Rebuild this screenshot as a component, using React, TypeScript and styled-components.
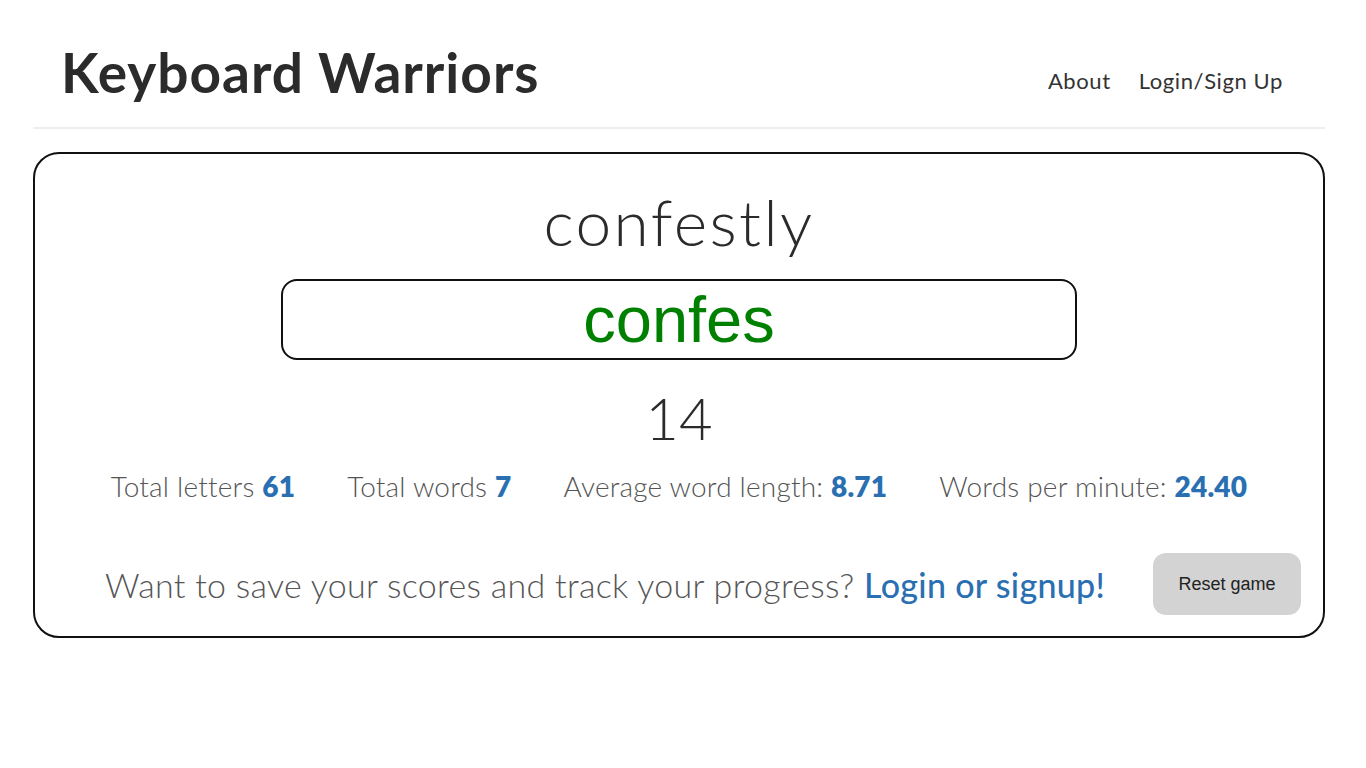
import styled, { createGlobalStyle } from 'styled-components';

const GlobalStyle = createGlobalStyle`
  body {
    margin: 0;
    background: #fff;
    font-family: Lato, "Open Sans", sans-serif;
    color: #333;
  }
`;

const Page = styled.div`
  width: 1292px;
  margin: 0 0 0 33px;
  padding-top: 25px;
`;

const Header = styled.header`
  display: flex;
  justify-content: space-between;
  align-items: center;
  height: 104px;
  padding: 0 42px 0 28px;
  border-bottom: 2px solid #eee;
  box-sizing: border-box;
`;

const Brand = styled.h1`
  margin: 0 0 8px;
  font-size: 55px;
  font-weight: 700;
  color: #2b2b2b;
  letter-spacing: 1px;
`;

const Nav = styled.nav`
  display: flex;
  gap: 28px;
  padding-top: 8px;
`;

const NavLink = styled.a`
  font-size: 22px;
  letter-spacing: 0.6px;
  color: #333;
  text-decoration: none;
  cursor: pointer;
`;

const Card = styled.main`
  margin-top: 23px;
  border: 2px solid #111;
  border-radius: 26px;
  height: 486px;
  box-sizing: border-box;
  display: flex;
  flex-direction: column;
  align-items: center;
  padding-top: 31px;
`;

const Target = styled.div`
  font-size: 64px;
  font-weight: 300;
  letter-spacing: 2.4px;
  color: #2b2b2b;
  line-height: 74px;
`;

const TypedBox = styled.div`
  margin-top: 20px;
  width: 796px;
  height: 81px;
  box-sizing: border-box;
  border: 2px solid #111;
  border-radius: 16px;
  display: flex;
  align-items: center;
  justify-content: center;
  font-family: "Liberation Sans", Arial, sans-serif;
  font-size: 65px;
  color: #008000;
`;

const Timer = styled.div`
  margin-top: 23px;
  font-size: 58px;
  font-weight: 300;
  color: #2b2b2b;
  line-height: 70px;
`;

const Stats = styled.div`
  margin-top: 16px;
  display: flex;
  gap: 52px;
  font-size: 28px;
  font-weight: 300;
  letter-spacing: 0.2px;
  color: #555;
`;

const Value = styled.b`
  font-weight: 800;
  color: #2a6fb2;
`;

const Footer = styled.div`
  margin-top: 50px;
  width: 100%;
  display: flex;
  align-items: center;
  padding: 0 22px 0 22px;
  box-sizing: border-box;
`;

const Prompt = styled.p`
  flex: 1;
  margin: 0;
  text-align: center;
  font-size: 34px;
  font-weight: 300;
  letter-spacing: 0.3px;
  color: #555;
`;

const PromptLink = styled.a`
  font-weight: 500;
  color: #2a6fb2;
  text-decoration: none;
  cursor: pointer;
`;

const ResetButton = styled.button`
  width: 148px;
  height: 62px;
  border: none;
  border-radius: 13px;
  background: #d3d3d3;
  font-family: "Liberation Sans", Arial, sans-serif;
  font-size: 18px;
  color: #222;
  cursor: pointer;
`;

export default function App() {
  const stats = [
    { label: 'Total letters', value: '61' },
    { label: 'Total words', value: '7' },
    { label: 'Average word length:', value: '8.71' },
    { label: 'Words per minute:', value: '24.40' },
  ];

  return (
    <>
      <GlobalStyle />
      <Page>
        <Header>
          <Brand>Keyboard Warriors</Brand>
          <Nav>
            <NavLink>About</NavLink>
            <NavLink>Login/Sign Up</NavLink>
          </Nav>
        </Header>
        <Card>
          <Target>confestly</Target>
          <TypedBox>confes</TypedBox>
          <Timer>14</Timer>
          <Stats>
            {stats.map((s) => (
              <span key={s.label}>
                {s.label} <Value>{s.value}</Value>
              </span>
            ))}
          </Stats>
          <Footer>
            <Prompt>
              Want to save your scores and track your progress?{' '}
              <PromptLink>Login or signup!</PromptLink>
            </Prompt>
            <ResetButton>Reset game</ResetButton>
          </Footer>
        </Card>
      </Page>
    </>
  );
}
